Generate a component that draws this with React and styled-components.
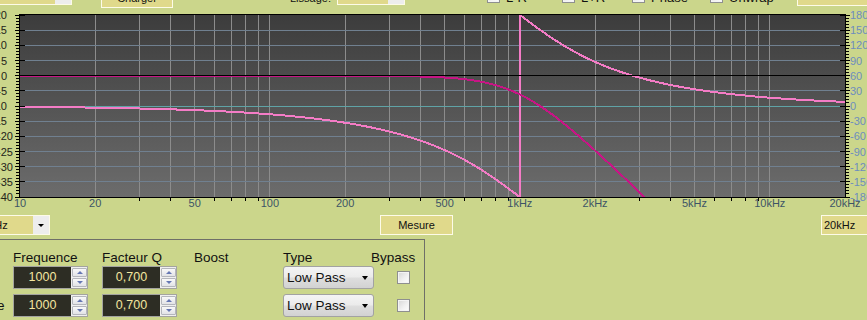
import styled, { createGlobalStyle } from "styled-components";

const GlobalStyle = createGlobalStyle`
  html, body {
    margin: 0;
    padding: 0;
    background: #cbd68b;
    overflow: hidden;
  }
  body {
    font-family: "Liberation Sans", Arial, sans-serif;
    color: #111;
  }
`;

// chart geometry (page coordinates)
const X0 = 20;
const X1 = 845;
const Y0 = 15;
const Y1 = 197;
const ROW = (Y1 - Y0) / 12;
const DECADE = (X1 - X0) / Math.log10(2000);
const Q = 0.7;
const F0 = 1000;

const fx = (f) => X0 + Math.log10(f / 10) * DECADE;
const px = (v) => Math.round(v - 0.5) + 0.5;
const rowY = (k) => Y0 + k * ROW;

function response(f) {
  const w = f / F0;
  const re = 1 - w * w;
  const im = w / Q;
  const db = -20 * Math.log10(re * re + im * im);
  let ph = (-2 * Math.atan2(im, re) * 180) / Math.PI;
  if (ph < -180) ph += 360;
  return { db, ph };
}

const magY = (db) => rowY(4) - (db * ROW) / 5;
const phY = (ph) => rowY(6) - (ph * ROW) / 30;

function buildPaths() {
  const mag = [];
  const left = [];
  const right = [];
  for (let x = X0; x <= X1; x += 1) {
    const f = 10 * Math.pow(10, (x - X0) / DECADE);
    const { db, ph } = response(f);
    const my = magY(db);
    if (my < Y1 + 4) mag.push(`${x},${my.toFixed(2)}`);
    if (f < F0) left.push(`${x},${phY(ph).toFixed(2)}`);
    else if (f > F0) right.push(`${x},${phY(ph).toFixed(2)}`);
  }
  const jx = fx(F0).toFixed(2);
  const phase = `M${left.join(" L")} L${jx},${Y1} L${jx},${Y0} L${right.join(" L")}`;
  return { mag: `M${mag.join(" L")}`, phase };
}

const PATHS = buildPaths();

const GRID_F = [];
[10, 100, 1000].forEach((d) => {
  for (let m = 1; m <= 9; m++) if (m * d > 10) GRID_F.push(m * d);
});
GRID_F.push(10000);

const X_LABELS = [
  [10, "10"],
  [20, "20"],
  [50, "50"],
  [100, "100"],
  [200, "200"],
  [500, "500"],
  [1000, "1kHz"],
  [2000, "2kHz"],
  [5000, "5kHz"],
  [10000, "10kHz"],
  [20000, "20kHz"],
];

const LEFT_LABELS = ["20", "15", "10", "5", "0", "-5", "-10", "-15", "-20", "-25", "-30", "-35", "-40"];
const RIGHT_LABELS = ["180", "150", "120", "90", "60", "30", "0", "-30", "-60", "-90", "-120", "-150", "-180"];

const Page = styled.div`
  width: 867px;
  height: 320px;
  overflow: hidden;
  display: flex;
  flex-direction: column;
`;

const TopBar = styled.div`
  display: flex;
  align-items: flex-end;
  height: 9px;
  flex-shrink: 0;
`;

const Combo = styled.div`
  display: flex;
  flex-shrink: 0;
  box-sizing: border-box;
  width: ${(p) => p.$w}px;
  height: 20px;
  margin-left: ${(p) => p.$ml || 0}px;
  margin-bottom: ${(p) => p.$mb || 0}px;
  border: 1px solid #fdfbe8;
`;

const ComboField = styled.div`
  flex: 1;
  background: #e0d98b;
  font-size: 11px;
  line-height: 18px;
  padding-left: 2px;
  white-space: nowrap;
  overflow: hidden;
`;

const ComboButton = styled.div`
  width: 16px;
  background: #ededed;
  display: flex;
  align-items: center;
  justify-content: center;

  &::after {
    content: "";
    display: ${(p) => (p.$arrow ? "block" : "none")};
    border-left: 3px solid transparent;
    border-right: 3px solid transparent;
    border-top: 3px solid #000;
  }
`;

const ActionButton = styled.div`
  flex-shrink: 0;
  box-sizing: border-box;
  width: ${(p) => p.$w}px;
  height: 20px;
  margin-left: ${(p) => p.$ml || 0}px;
  margin-bottom: ${(p) => p.$mb || 0}px;
  background: #e0d98b;
  border: 1px solid #fdfbe8;
  font-size: 11px;
  line-height: 18px;
  text-align: center;
  color: #111;
`;

const TopLabel = styled.div`
  flex-shrink: 0;
  width: ${(p) => p.$w}px;
  margin-left: ${(p) => p.$ml || 0}px;
  margin-bottom: 4px;
  font-size: 11px;
  line-height: 13px;
  white-space: nowrap;
`;

const CheckItem = styled.div`
  flex-shrink: 0;
  display: flex;
  align-items: flex-end;
  gap: 6px;
  width: ${(p) => p.$w}px;
  margin-left: ${(p) => p.$ml || 0}px;
`;

const CheckBox = styled.div`
  flex-shrink: 0;
  box-sizing: border-box;
  width: 13px;
  height: 13px;
  margin-bottom: ${(p) => p.$mb || 0}px;
  margin-left: ${(p) => p.$ml || 0}px;
  margin-top: ${(p) => p.$mt || 0}px;
  border: 1px solid #8e8f8f;
  background: linear-gradient(135deg, #d6d6d6 0%, #f2f2f2 60%, #fdfdfd 100%);
  box-shadow: inset 0 0 0 1px #f4f4f4;
`;

const CheckText = styled.div`
  font-size: 13px;
  line-height: 15px;
  margin-bottom: 4px;
  white-space: nowrap;
`;

const ChartSvg = styled.svg`
  display: block;
  flex-shrink: 0;
  font-family: "Liberation Sans", Arial, sans-serif;
  font-size: 11px;
`;

const ControlRow = styled.div`
  display: flex;
  align-items: flex-start;
  height: 27px;
  padding-top: 3px;
  box-sizing: border-box;
  flex-shrink: 0;
`;

const RangeBox = styled.div`
  flex-shrink: 0;
  box-sizing: border-box;
  width: 50px;
  height: 20px;
  margin-left: auto;
  margin-right: -4px;
  background: #e0d98b;
  border: 1px solid #fdfbe8;
  font-size: 11px;
  line-height: 18px;
  padding-left: 2px;
`;

const GroupBox = styled.div`
  box-sizing: border-box;
  width: 458px;
  height: 90px;
  margin-left: -33px;
  padding-top: 9px;
  border-top: 1px solid #6f6f68;
  border-right: 1px solid #6f6f68;
  display: grid;
  grid-template-columns: 46px 89px 92px 89px 88px 1fr;
  grid-template-rows: 17px 28px 23px;
  align-items: start;
`;

const HeadLabel = styled.div`
  font-size: 13.5px;
  line-height: 17px;
  white-space: nowrap;
`;

const RowLabel = styled.div`
  font-size: 13.5px;
  line-height: 23px;
  white-space: nowrap;
`;

const UpDown = styled.div`
  box-sizing: border-box;
  display: flex;
  width: 75px;
  height: 23px;
  border: 1px solid #a4a4a0;
  background: #f0f0f0;
`;

const UpDownValue = styled.div`
  flex: 1;
  background: #2d2d24;
  color: #f3e6a0;
  font-size: 12.5px;
  line-height: 21px;
  text-align: center;
`;

const Spin = styled.div`
  width: 16px;
  display: flex;
  flex-direction: column;
  gap: 1px;
  padding: 1px 0 1px 1px;
  box-sizing: border-box;
`;

const SpinButton = styled.div`
  flex: 1;
  display: flex;
  align-items: center;
  justify-content: center;
  border: 1px solid #b4b6bc;
  border-radius: 1px;
  background: linear-gradient(#f9f9f9, #e2e3e6);

  &::after {
    content: "";
    border-left: 3.5px solid transparent;
    border-right: 3.5px solid transparent;
    ${(p) => (p.$down ? "border-top" : "border-bottom")}: 3.5px solid #6577b3;
  }
`;

const Select = styled.div`
  box-sizing: border-box;
  position: relative;
  width: 91px;
  height: 23px;
  border: 1px solid #a2a2a2;
  border-radius: 3px;
  background: linear-gradient(#f4f4f4 0%, #ebebeb 48%, #dedede 52%, #d2d2d2 100%);
  font-size: 13.5px;
  line-height: 21px;
  padding-left: 3px;

  &::after {
    content: "";
    position: absolute;
    right: 5px;
    top: 9px;
    border-left: 3.5px solid transparent;
    border-right: 3.5px solid transparent;
    border-top: 4px solid #000;
  }
`;

function Chart() {
  const plotW = X1 - X0;
  const plotH = Y1 - Y0;
  const labeled = new Set(X_LABELS.map(([f]) => f));
  const minor = [];
  for (let i = 0; i <= 60; i++) minor.push({ y: px(Y0 + (i * ROW) / 5), major: i % 5 === 0 });

  return (
    <ChartSvg width="867" height="203" viewBox="0 9 867 203">
      <defs>
        <linearGradient id="plotBg" x1="0" y1="0" x2="0" y2="1">
          <stop offset="0" stopColor="#3c3c3c" />
          <stop offset="1" stopColor="#6c6c6c" />
        </linearGradient>
        <clipPath id="plotClip">
          <rect x={X0} y={Y0} width={plotW} height={plotH} />
        </clipPath>
      </defs>

      <rect x={X0} y={Y0} width={plotW} height={plotH} fill="url(#plotBg)" />

      <g shapeRendering="crispEdges" strokeWidth="1">
        {GRID_F.map((f) => (
          <line key={f} x1={px(fx(f))} x2={px(fx(f))} y1={Y0} y2={Y1} stroke="#8c8c8c" />
        ))}
        {Array.from({ length: 11 }, (_, i) => (
          <line key={i} x1={X0} x2={X1} y1={px(rowY(i + 1))} y2={px(rowY(i + 1))} stroke="#708090" />
        ))}
        <line x1={X0} x2={X1} y1={px(rowY(6))} y2={px(rowY(6))} stroke="#5fa3a6" />
      </g>

      <g clipPath="url(#plotClip)" fill="none" strokeWidth="2" shapeRendering="crispEdges">
        <path d={PATHS.phase} stroke="#f47cc6" />
        <path d={PATHS.mag} stroke="#c71585" />
      </g>

      <line
        x1={X0}
        x2={X1}
        y1={px(rowY(4))}
        y2={px(rowY(4))}
        stroke="#000"
        shapeRendering="crispEdges"
      />

      <rect
        x={X0 - 0.5}
        y={Y0 - 0.5}
        width={plotW + 1}
        height={plotH + 1}
        fill="none"
        stroke="#000"
        shapeRendering="crispEdges"
      />

      <g stroke="#000" shapeRendering="crispEdges">
        {minor.map(({ y, major }, i) => (
          <line key={`l${i}`} x1={major ? 15 : 16} x2={major ? 25 : 20} y1={y} y2={y} />
        ))}
        {minor.map(({ y, major }, i) => (
          <line key={`r${i}`} x1={major ? 840 : 845} x2={major ? 850 : 849} y1={y} y2={y} />
        ))}
        {GRID_F.filter((f) => !labeled.has(f)).map((f) => (
          <line key={`b${f}`} x1={px(fx(f))} x2={px(fx(f))} y1={Y1} y2={Y1 + 4} />
        ))}
      </g>

      <g fill="#24241a">
        {LEFT_LABELS.map((t, i) => (
          <text key={t} x={i < 8 ? 7 : 13} y={rowY(i) + 4} textAnchor="end">
            {t}
          </text>
        ))}
      </g>
      <g fill="#6d8dbe">
        {RIGHT_LABELS.map((t, i) => (
          <text key={t} x={850} y={rowY(i) + 4}>
            {t}
          </text>
        ))}
      </g>
      <g fill="#3d5466">
        {X_LABELS.map(([f, t]) => (
          <text key={t} x={fx(f)} y={207} textAnchor="middle">
            {t}
          </text>
        ))}
      </g>
    </ChartSvg>
  );
}

function FilterRow({ label, freq, q, type }) {
  return (
    <>
      <RowLabel>{label}</RowLabel>
      <UpDown>
        <UpDownValue>{freq}</UpDownValue>
        <Spin>
          <SpinButton />
          <SpinButton $down />
        </Spin>
      </UpDown>
      <UpDown>
        <UpDownValue>{q}</UpDownValue>
        <Spin>
          <SpinButton />
          <SpinButton $down />
        </Spin>
      </UpDown>
      <div />
      <Select>{type}</Select>
      <CheckBox $ml={26} $mt={5} />
    </>
  );
}

export default function App() {
  return (
    <>
      <GlobalStyle />
      <Page>
        <TopBar>
          <Combo $w={82} $ml={-10} $mb={4}>
            <ComboField>Hz</ComboField>
            <ComboButton />
          </Combo>
          <ActionButton $w={72} $ml={29} $mb={1}>
            Charger
          </ActionButton>
          <TopLabel $w={47} $ml={117}>
            Lissage:
          </TopLabel>
          <Combo $w={68} $mb={4}>
            <ComboField />
            <ComboButton />
          </Combo>
          <CheckItem $w={75} $ml={82}>
            <CheckBox $mb={6} />
            <CheckText>L-R</CheckText>
          </CheckItem>
          <CheckItem $w={70}>
            <CheckBox $mb={6} />
            <CheckText>L+R</CheckText>
          </CheckItem>
          <CheckItem $w={78}>
            <CheckBox $mb={6} />
            <CheckText>Phase</CheckText>
          </CheckItem>
          <CheckItem $w={87}>
            <CheckBox $mb={6} />
            <CheckText>Unwrap</CheckText>
          </CheckItem>
          <ActionButton $w={76} $mb={3} />
        </TopBar>

        <Chart />

        <ControlRow>
          <Combo $w={71} $ml={-21}>
            <ComboField>10Hz</ComboField>
            <ComboButton $arrow />
          </Combo>
          <ActionButton $w={73} $ml={330}>
            Mesure
          </ActionButton>
          <RangeBox>20kHz</RangeBox>
        </ControlRow>

        <GroupBox>
          <div />
          <HeadLabel>Frequence</HeadLabel>
          <HeadLabel>Facteur Q</HeadLabel>
          <HeadLabel>Boost</HeadLabel>
          <HeadLabel>Type</HeadLabel>
          <HeadLabel>Bypass</HeadLabel>
          <FilterRow label="Aigu" freq="1000" q="0,700" type="Low Pass" />
          <FilterRow label="Basse" freq="1000" q="0,700" type="Low Pass" />
        </GroupBox>
      </Page>
    </>
  );
}
